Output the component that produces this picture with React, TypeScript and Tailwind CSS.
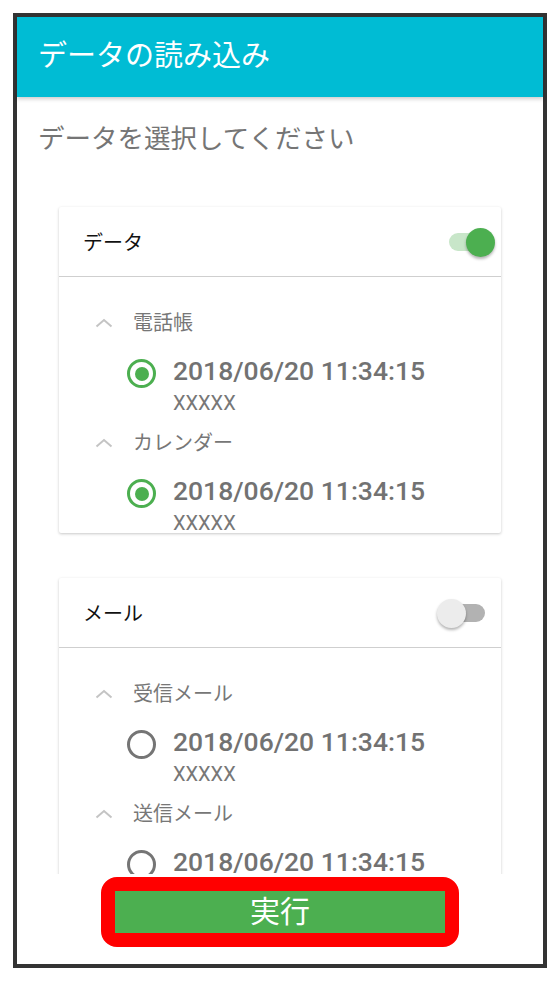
import React from "react";

type Entry = { label: string; checked: boolean };

function Chevron() {
  return (
    <svg width="18" height="10" viewBox="0 0 18 10" fill="none">
      <path d="M1.5 8.5 L9 2 L16.5 8.5" stroke="#c4c4c4" strokeWidth="2" />
    </svg>
  );
}

function Radio({ checked }: { checked: boolean }) {
  return (
    <div
      className={
        "w-[29px] h-[29px] shrink-0 rounded-full border-[3px] flex items-center justify-center mt-[3px] " +
        (checked ? "border-[#4caf50]" : "border-[#757575]")
      }
    >
      {checked && <div className="w-[14px] h-[14px] rounded-full bg-[#4caf50]" />}
    </div>
  );
}

function Toggle({ on }: { on: boolean }) {
  return (
    <div className="relative w-[58px] h-[30px]">
      <div
        className={
          "absolute left-[12px] top-[6px] w-[36px] h-[18px] rounded-full " +
          (on ? "bg-[#c8e6c9]" : "bg-[#b2b2b2]")
        }
      />
      <div
        className={
          "absolute top-px w-[29px] h-[29px] rounded-full shadow-[0_2px_3px_rgba(0,0,0,0.3)] " +
          (on ? "left-[29px] bg-[#4caf50]" : "left-0 bg-[#ececec]")
        }
      />
    </div>
  );
}

function DataCard({ title, on, entries, fixed }: { title: string; on: boolean; entries: Entry[]; fixed?: boolean }) {
  return (
    <div
      className={
        "ml-[42px] w-[442px] bg-white rounded-[2px] overflow-hidden shadow-[0_1px_3px_rgba(0,0,0,0.22)] " +
        (fixed ? "h-[326px]" : "")
      }
    >
      <div className="h-[70px] border-b border-[#cfcfcf] flex items-center justify-between pl-[24px] pr-[6px]">
        <span className="text-[20px] text-[#111] mt-[2px]">{title}</span>
        <Toggle on={on} />
      </div>
      <div className="pt-[26px]">
        {entries.map((e) => (
          <div key={e.label} className="mb-[8px]">
            <div className="h-[40px] flex items-center pl-[36px]">
              <Chevron />
              <span className="ml-[20px] text-[20px] text-[#777]">{e.label}</span>
            </div>
            <div className="flex pl-[68px] mt-[13px]">
              <Radio checked={e.checked} />
              <div className="ml-[17px]">
                <div className="h-[30px] leading-[30px] text-[26.5px] font-medium text-[#727272]">2018/06/20 11:34:15</div>
                <div className="mt-[5px] h-[24px] leading-[24px] text-[20px] text-[#777]">XXXXX</div>
              </div>
            </div>
          </div>
        ))}
      </div>
    </div>
  );
}

export default function App() {
  return (
    <div className="w-[560px] h-[981px] bg-white p-[13px] font-['Roboto','Noto_Sans_CJK_JP',sans-serif]">
      <div className="h-[955px] border-4 border-[#333] flex flex-col">
        <header className="h-[80px] shrink-0 bg-[#00bcd4] pl-[21px] flex items-center text-white text-[29px] shadow-[0_2px_4px_rgba(0,0,0,0.2)] relative z-10">
          データの読み込み
        </header>
        <main className="flex-1 overflow-hidden">
          <p className="mt-[25px] ml-[21px] text-[26.5px] leading-[34px] text-[#757575]">データを選択してください</p>
          <div className="mt-[51px]">
            <DataCard
              title="データ"
              on
              fixed
              entries={[
                { label: "電話帳", checked: true },
                { label: "カレンダー", checked: true },
              ]}
            />
          </div>
          <div className="mt-[45px]">
            <DataCard
              title="メール"
              on={false}
              entries={[
                { label: "受信メール", checked: false },
                { label: "送信メール", checked: false },
              ]}
            />
          </div>
        </main>
        <footer className="h-[90px] shrink-0 flex justify-center pt-[3px]">
          <div className="h-[70px] border-[14px] border-[#ff0000] rounded-[16px]">
            <button className="w-[330px] h-[42px] bg-[#4caf50] text-white text-[30px] leading-none flex items-center justify-center">
              実行
            </button>
          </div>
        </footer>
      </div>
    </div>
  );
}
